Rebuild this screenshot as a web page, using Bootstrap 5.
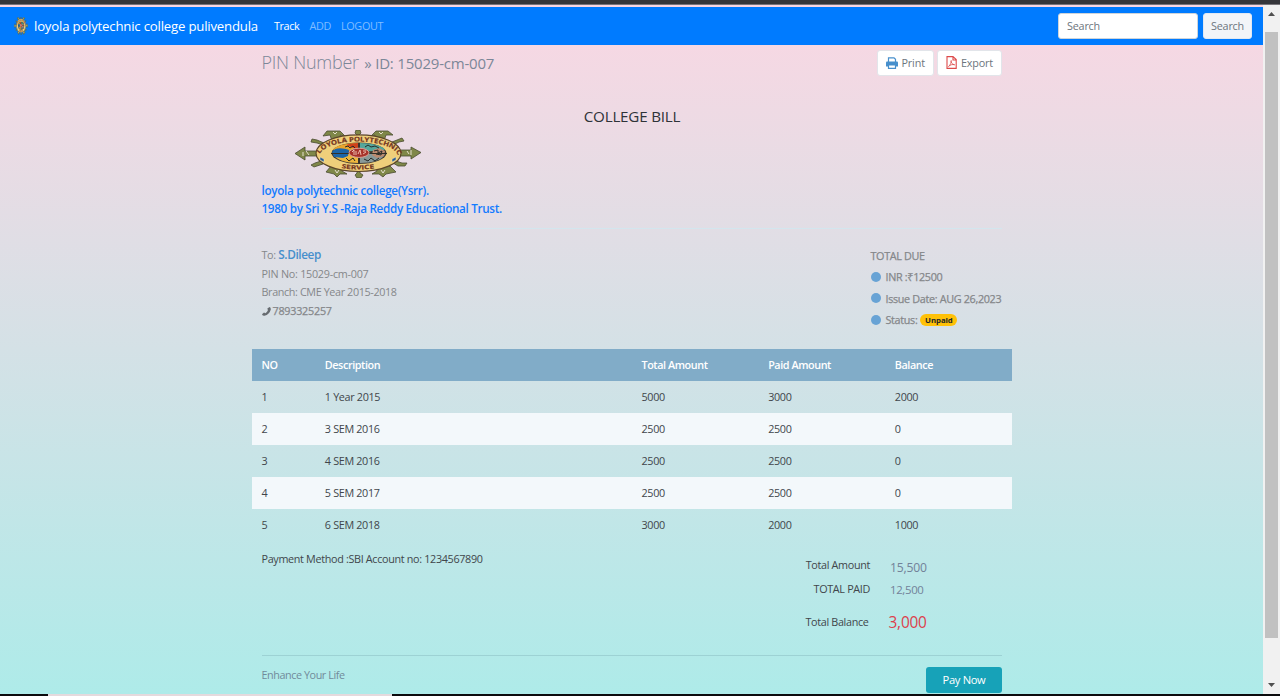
<!DOCTYPE html>
<html lang="en">
<head>
<meta charset="utf-8">
<title>College Bill</title>
<link href="https://cdn.jsdelivr.net/npm/bootstrap@5.3.0/dist/css/bootstrap.min.css" rel="stylesheet">
<script src="https://cdn.jsdelivr.net/npm/bootstrap@5.3.0/dist/js/bootstrap.bundle.min.js" defer></script>
<style>
  body{height:696px;overflow:hidden;font:10.8px/18px "Open Sans","Noto Sans",sans-serif;letter-spacing:-.33px;color:#41464b}
  .edge-top{height:5px;background:#35363a;border-bottom:1px solid #77757a}
  .edge-bottom{height:2px;background:#0b0b0d}
  .edge-bottom div{width:344px;margin-left:48px;background:#e4dadd}
  .sheet{width:1263px;padding-top:2px;background:linear-gradient(#fad7e3,#aeebe9)}
  .topnav{height:38px;background:#007bff;color:#fff;padding:0 11px 0 14px}
  .brand-text{font-size:13.2px;margin-left:6px;letter-spacing:-.2px}
  .topnav a{color:#80bdff;text-decoration:none;margin-right:10px}
  .topnav a.on{color:#fff}
  .find{width:140px;height:26px;font-size:10.8px;letter-spacing:-.2px;padding:0 8px 2px;border-radius:3px;border:1px solid #ced4da;background:#fff;color:#6c757d}
  .find::placeholder{color:#6c757d;opacity:1}
  .find-btn{width:49px;height:26px;font-size:10.8px;letter-spacing:-.2px;line-height:24px;padding:0;border-radius:3px;background:#f2f4f8;border:1px solid #e2e8f2;color:#6c757d;margin-left:5px}
  .bill{width:760px;margin-left:252px}
  .inset{padding:0 10px 0 9.5px}
  .head-row{height:36px}
  .pin{font-size:18px;font-weight:300;color:#7c8798;line-height:37px;letter-spacing:-.25px}
  .pin small{font-size:15px;font-weight:400;letter-spacing:-.2px;margin-left:1px}
  .tool{height:26px;border:1px solid #e2e5ea;border-radius:3px;background:#fff;color:#6c757d;font-size:10.8px;letter-spacing:-.15px;line-height:24px;padding:0 8px;margin-left:3px}
  .bill-title{margin-top:25px;height:21px;line-height:20px;font-size:15.2px;letter-spacing:-.2px;color:#2e3338}
  .emblem{display:block;margin:3px 0 0 43px}
  .org{color:#147bff;font-size:11.7px;font-weight:600;letter-spacing:-.31px;line-height:18px}
  .rule-a{height:1px;background:#d3e6ee;margin-top:11px}
  .grey{color:#85878a}
  .name{color:#478fcc;font-size:11.8px;font-weight:600;letter-spacing:-.4px}
  .due{width:131.5px;line-height:21.3px;white-space:nowrap}
  .dot{width:10px;height:10px;border-radius:50%;background:#68a3d5;margin-right:5px}
  .medium{-webkit-text-stroke:.25px}
  .pill{background:#ffc107;color:#212529;border-radius:8px;font-size:7.8px;font-weight:700;letter-spacing:-.05px;-webkit-text-stroke:0;line-height:12px;height:12px;width:37px;text-align:center;margin-left:3px}
  .bill .row{--bs-gutter-x:19px;margin:0;height:32px;line-height:32px}
  .thead{background:#81acc8;color:#fff;font-weight:600;letter-spacing:-.42px}
  .alt{background:#f3f8fb}
  .sum-label{width:608.5px;text-align:right}
  .sum-val{margin-left:20px;color:#728299}
  .rule-b{height:1px;background:#9dd2d4}
  .pay{width:76px;height:26px;background:#17a2b8;color:#fff;border:0;border-radius:3px;padding:0;font-size:11.2px;letter-spacing:-.35px;line-height:26px}
  .scroller{width:17px;background:#f1f1f1}
  .thumb{width:13px;height:606px;background:#c1c1c1}
</style>
</head>
<body class="d-flex flex-column">
<svg width="0" height="0" class="position-absolute">
  <defs>
    <path id="arcTop" d="M24 27A39.500 15.500 0 0 1 103 27"/>
    <path id="arcBot" d="M23 24A40.500 15.500 0 0 0 104 24"/>
    <symbol id="seal" viewBox="0 0 126 48" preserveAspectRatio="none">
      <g fill="#7f8748" stroke="#4a4b31" stroke-width=".8">
        <path d="M0 23.500L10 17V21H22V26H10V30Z"/><path d="M126 22.500L116 17V20H104V26H116V29Z"/>
        <path d="M28 6L32 1H45L50 6 45 5 48 11H37L35 5Z"/><path d="M98 5L93 1H81L76 6 80 5 78 11H89L91 5Z"/>
        <path d="M31 42L36 36H49L47 41 52 44 45 44 42 47 39 44Z"/><path d="M101 42L95 36H80L82 41 77 44 84 44 88 47 91 44Z"/>
        <path d="M62 9V5L60 3 61 0H65L66 3 64 5V9ZM62 39V43L60 45 62 48H66L68 45 65 43V39Z"/>
        <path d="M28 15L22 13 16 12 17 9 22 10 29 13ZM98 15L104 12 109 11 107 8 102 10 97 12ZM26 31L20 33 16 35 19 37 28 34ZM101 31L107 33 112 33 110 36 103 36 98 33Z"/>
      </g>
      <path d="M8 22V26M11 21L14 25M116 20V25M112 21L114 24M38 2L40 4 42 2M84 2L86 4 88 2M40 40L42 43 44 40M86 40L88 43 90 40" stroke="#e6dfce" fill="none"/>
      <ellipse cx="63.500" cy="23.200" rx="42.500" ry="18.300" fill="#efcf7b" stroke="#5b4529" stroke-width="1.200"/>
      <ellipse cx="64" cy="23.200" rx="27.500" ry="10.800" fill="#433a31"/>
      <path d="M63 22V13C50 13 40 16 38 20Z" fill="#e9a52d"/><path d="M63 20V13C58 13 54 14 51 15Z" fill="#ce421b"/>
      <path d="M65 22V13C78 13 88 16 90 20Z" fill="#54a69b"/>
      <path d="M63 24H38C41 30 51 33 63 33Z" fill="#efb83e"/><path d="M65 24H90C88 30 77 33 65 33Z" fill="#899998"/>
      <path d="M37 22C40 17 48 18 54 20L53 26 48 28 39 27Z" fill="#1c65a7"/>
      <path d="M78 20L84 18 90 21 89 26 82 28 77 25Z" fill="#bd8b70"/>
      <path d="M50 17L53 16 55 18 58 16 60 18M70 17L73 15 76 17 80 16 84 18M51 28L54 31 58 28 60 31M69 29L73 31 76 28 80 31 84 28M79 21L83 20 83 23 87 21 86 25 81 24" fill="none" stroke="#272a28" stroke-width="1"/>
      <path d="M64 13V34M36 23.500H92" stroke="#343128"/>
      <ellipse cx="64" cy="22.800" rx="10" ry="4.600" fill="#a7322b" stroke="#d9a297"/>
      <path d="M57 22L59 20V25M61 21V25M63 24L65 20 66 25M68 21H71M68 24L71 22" stroke="#f3cabb" fill="none" stroke-width=".9"/>
      <path d="M25 27L29 29V32L25 30ZM101 27L97 29V32L101 30Z" fill="#285c91" stroke="#f5e5b8" stroke-width=".5"/>
      <g fill="#74351e" stroke="#74351e" stroke-width=".2" font-family="Open Sans,sans-serif" font-weight="700" letter-spacing="0">
        <text font-size="6.500"><textPath href="#arcTop" textLength="86" lengthAdjust="spacingAndGlyphs" startOffset="3">LOYOLA POLYTECHNIC</textPath></text>
        <text font-size="5.800"><textPath href="#arcBot" textLength="33" lengthAdjust="spacingAndGlyphs" startOffset="29">SERVICE</textPath></text>
      </g>
    </symbol>
  </defs>
</svg>

<div class="edge-top flex-shrink-0"></div>
<div class="d-flex flex-grow-1 overflow-hidden">
  <div class="sheet flex-shrink-0">
    <nav class="topnav d-flex align-items-center">
      <svg width="14" height="18"><use href="#seal"/></svg>
      <span class="brand-text me-3">loyola polytechnic college pulivendula</span>
      <a class="on" href="#">Track</a><a href="#">ADD</a><a href="#">LOGOUT</a>
      <input class="find ms-auto" placeholder="Search"><button class="find-btn btn">Search</button>
    </nav>

    <main class="bill">
      <div class="inset head-row d-flex align-items-center">
        <div class="pin me-auto">PIN Number <small>» ID: 15029-cm-007</small></div>
        <button class="tool"><svg width="12" height="12" viewBox="0 0 12 12" class="me-1" style="margin-top:-2px"><path d="M0 5.500Q0 4.500 1 4.500H11Q12 4.500 12 5.500V9.500H0Z" fill="#478fcc"/><path d="M2.500 5V.8H8L9.500 2.300V5ZM2.500 8V11.300H9.500V8Z" fill="#fff" stroke="#478fcc" stroke-width="1.200"/></svg>Print</button>
        <button class="tool"><svg width="11" height="13" viewBox="0 0 11 13" class="me-1" style="margin-top:-3px"><path d="M1 .6H7L10.200 3.600V12.400H1ZM7 .6V4H10.200" fill="none" stroke="#dd4949" stroke-width="1.100"/><path d="M2.500 10.500C4.500 9 5.500 6 5.200 4.500 4.500 6 6 8.500 8.700 8.800 6.500 8 4 9 2.500 10.500" fill="none" stroke="#dd4949" stroke-width=".8"/></svg>Export</button>
      </div>
      <div class="bill-title text-center">COLLEGE BILL</div>
      <svg class="emblem" width="126" height="48"><use href="#seal"/></svg>
      <div class="inset">
        <div class="org" style="margin-top:3px">loyola polytechnic college(Ysrr).</div>
        <div class="org">1980 by Sri Y.S -Raja Reddy Educational Trust.</div>
        <div class="rule-a"></div>
        <div class="grey d-flex justify-content-between" style="height:120px;padding-top:16px">
          <div>
            <div>To: <span class="name">S.Dileep</span></div>
            <div style="line-height:19px;letter-spacing:-.26px">PIN No: 15029-cm-007</div>
            <div style="letter-spacing:-.38px">Branch: CME Year 2015-2018</div>
            <div class="medium" style="line-height:20px;letter-spacing:-.25px"><svg width="9" height="9" viewBox="0 0 9 9" style="margin:-2px 2px 0 0"><path d="M0 7.200L2 5.500 3.500 6.200Q5.300 5 6 3L5.200 1.700 7.400 0Q9 .4 8.800 2.500 7.500 7.500 2.500 8.800.600 9 0 7.200" fill="#666b70"/></svg>7893325257</div>
          </div>
          <div class="due medium">
            <div>TOTAL DUE</div>
            <div class="d-flex align-items-center"><i class="dot"></i><span>INR :₹12500</span></div>
            <div class="d-flex align-items-center"><i class="dot"></i><span>Issue Date: AUG 26,2023</span></div>
            <div class="d-flex align-items-center"><i class="dot"></i><span>Status:</span><span class="pill">Unpaid</span></div>
          </div>
        </div>
      </div>

      <div class="row thead"><div class="col-1">NO</div><div class="col-5">Description</div><div class="col-2">Total Amount</div><div class="col-2">Paid Amount</div><div class="col-2">Balance</div></div>
      <div class="row"><div class="col-1">1</div><div class="col-5">1 Year 2015</div><div class="col-2">5000</div><div class="col-2">3000</div><div class="col-2">2000</div></div>
      <div class="row alt"><div class="col-1">2</div><div class="col-5">3 SEM 2016</div><div class="col-2">2500</div><div class="col-2">2500</div><div class="col-2">0</div></div>
      <div class="row"><div class="col-1">3</div><div class="col-5">4 SEM 2016</div><div class="col-2">2500</div><div class="col-2">2500</div><div class="col-2">0</div></div>
      <div class="row alt"><div class="col-1">4</div><div class="col-5">5 SEM 2017</div><div class="col-2">2500</div><div class="col-2">2500</div><div class="col-2">0</div></div>
      <div class="row"><div class="col-1">5</div><div class="col-5">6 SEM 2018</div><div class="col-2">3000</div><div class="col-2">2000</div><div class="col-2">1000</div></div>

      <div class="inset">
        <div style="height:15px;padding-top:9px">Payment Method :SBI Account no: 1234567890</div>
        <div class="d-flex" style="height:20px"><span class="sum-label">Total Amount</span><span class="sum-val" style="font-size:12.2px;padding-top:3px;letter-spacing:-.2px">15,500</span></div>
        <div class="d-flex" style="margin-top:4px;height:19px"><span class="sum-label">TOTAL PAID</span><span class="sum-val" style="font-size:11.4px;padding-top:1px">12,500</span></div>
        <div class="d-flex" style="margin-top:14px;height:18px"><span class="sum-label" style="width:607px">Total Balance</span><span class="sum-val" style="font-size:15.4px;padding-top:1px;color:#dd3f4c;letter-spacing:-.2px">3,000</span></div>
        <div class="rule-b" style="margin-top:24px"></div>
        <div class="d-flex" style="padding-top:11px"><span class="me-auto" style="color:#718a9a;margin-top:-1px;letter-spacing:-.43px">Enhance Your Life</span><button class="pay">Pay Now</button></div>
      </div>
    </main>
  </div>
  <div class="scroller d-flex flex-column align-items-center">
    <svg width="17" height="27" class="flex-shrink-0"><path d="M5 11L8.500 7 12 11Z" fill="#505050"/></svg>
    <div class="thumb flex-shrink-0"></div>
    <svg width="17" height="56" class="flex-shrink-0"><path d="M5 45L8.500 49 12 45Z" fill="#505050"/></svg>
  </div>
</div>
<div class="edge-bottom d-flex flex-shrink-0"><div></div></div>
</body>
</html>
